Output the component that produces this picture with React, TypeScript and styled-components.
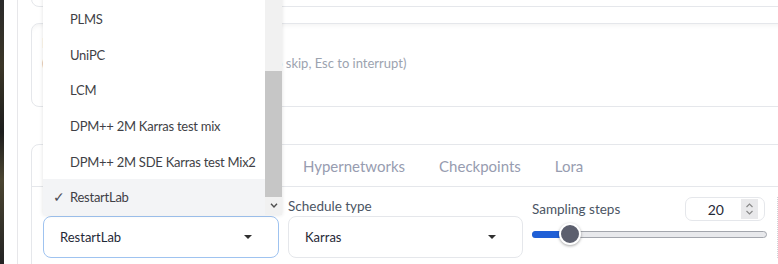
import React from 'react';
import styled, { createGlobalStyle } from 'styled-components';

const GlobalStyle = createGlobalStyle`
  html, body {
    margin: 0;
    padding: 0;
    background: #ffffff;
  }
  body {
    font-family: 'Lato', 'Liberation Sans', sans-serif;
    overflow: hidden;
  }
  * {
    box-sizing: border-box;
  }
`;

const Page = styled.div`
  display: flex;
  width: 778px;
  height: 264px;
  overflow: hidden;
`;

const EdgeStrip = styled.div`
  flex: none;
  width: 4px;
  background: linear-gradient(
    180deg,
    #2a2a2a 0%,
    #3b3627 25%,
    #1d1d1d 50%,
    #4b4531 68%,
    #232323 100%
  );
`;

const Gutter = styled.div`
  flex: none;
  width: 14px;
  margin-left: 13px;
  border-left: 1px solid #e7e7ea;
`;

const Main = styled.div`
  flex: none;
  width: 780px;
  display: flex;
  flex-direction: column;
`;

const Card = styled.div`
  flex: none;
  border: 1px solid #e5e7eb;
  border-radius: 8px;
  background: #ffffff;
`;

const PromptTail = styled(Card)`
  height: 30px;
  margin-top: -23px;
`;

const NegativePrompt = styled(Card)`
  height: 84px;
  margin-top: 16px;
  padding: 9px 10px;
  box-shadow: inset 0 5px 6px -5px rgba(0, 0, 0, 0.08);
`;

const Placeholder = styled.div`
  font-size: 13px;
  line-height: 20px;
  color: #9ca3af;
  white-space: pre;
`;

const SettingsCard = styled(Card)`
  margin-top: 37px;
  height: 140px;
`;

const TabNav = styled.div<{ $offset: number }>`
  display: flex;
  height: 42px;
  padding-left: ${(p) => p.$offset}px;
  border-bottom: 1px solid #e5e7eb;
`;

const Tab = styled.div<{ $active?: boolean }>`
  display: flex;
  align-items: center;
  padding: 0 17px;
  font-size: 15px;
  color: ${(p) => (p.$active ? '#ea580c' : '#979cb0')};
  white-space: nowrap;
`;

const SettingsRow = styled.div`
  display: flex;
  gap: 9px;
  padding: 10px 0 0 11px;
`;

const Column = styled.div<{ $width: number }>`
  flex: none;
  width: ${(p) => p.$width}px;
  display: flex;
  flex-direction: column;
`;

const Label = styled.div`
  height: 19px;
  font-size: 13.5px;
  line-height: 19px;
  color: #4b5563;
  white-space: nowrap;
`;

const FieldWrap = styled.div`
  position: relative;
`;

const Field = styled.div<{ $focused?: boolean }>`
  display: flex;
  align-items: center;
  height: 42px;
  padding: 0 26px 0 16px;
  border: 1px solid ${(p) => (p.$focused ? '#9fc3f0' : '#e5e7eb')};
  border-radius: 8px;
  background: #ffffff;
  font-size: 13px;
  color: #1f2937;
`;

const FieldValue = styled.span`
  flex: 1;
`;

const Caret = styled.span`
  width: 0;
  height: 0;
  border-left: 4px solid transparent;
  border-right: 4px solid transparent;
  border-top: 4px solid #2f2f2f;
`;

const OptionsList = styled.div`
  position: absolute;
  left: 0;
  bottom: calc(100% + 1px);
  width: 239px;
  display: flex;
  background: #ffffff;
  box-shadow: 0 0 4px rgba(0, 0, 0, 0.12);
  z-index: 10;
`;

const Options = styled.div`
  flex: 1;
  min-width: 0;
  display: flex;
  flex-direction: column;
`;

const Option = styled.div<{ $selected?: boolean }>`
  display: flex;
  align-items: center;
  height: 35.6px;
  padding-left: 10px;
  font-size: 13px;
  letter-spacing: -0.25px;
  color: #3f3f46;
  background: ${(p) => (p.$selected ? '#f3f4f6' : 'transparent')};
  white-space: nowrap;
  overflow: hidden;
`;

const Check = styled.span`
  flex: none;
  width: 17px;
  font-family: 'DejaVu Sans', sans-serif;
  font-size: 14px;
  font-weight: 300;
  color: #4b4b55;
`;

const Scrollbar = styled.div`
  flex: none;
  width: 17px;
  display: flex;
  flex-direction: column;
  background: #f1f1f1;
  padding-bottom: 2px;
`;

const ScrollSpacer = styled.div`
  flex: 1;
`;

const ScrollThumb = styled.div`
  height: 126px;
  background: #c6c6c6;
`;

const ScrollArrow = styled.div`
  height: 16px;
  display: flex;
  align-items: center;
  justify-content: center;
`;

const StepsHeader = styled.div`
  display: flex;
  align-items: center;
  justify-content: space-between;
  height: 24px;
`;

const StepsLabel = styled(Label)`
  margin-top: 1px;
`;

const NumberBox = styled.div`
  display: flex;
  align-items: center;
  width: 80px;
  height: 24px;
  margin-right: 2px;
  padding-right: 6px;
  border: 1px solid #e5e7eb;
  border-radius: 7px;
  font-size: 14px;
  color: #1f2937;
`;

const NumberValue = styled.span`
  flex: 1;
  text-align: right;
  padding-right: 17px;
`;

const Spinner = styled.div`
  width: 17px;
  height: 20px;
  background: #e9e9eb;
  display: flex;
  align-items: center;
  justify-content: center;
`;

const SliderArea = styled.div`
  height: 26px;
  display: flex;
  align-items: center;
`;

const Track = styled.div`
  position: relative;
  width: 100%;
  height: 7px;
  border: 1px solid #a3a6ad;
  border-radius: 4px;
  background: #e8e9ec;
`;

const TrackFill = styled.div`
  position: absolute;
  left: -1px;
  top: -1px;
  bottom: -1px;
  border-radius: 4px 0 0 4px;
  background: #1f5fd6;
`;

const Thumb = styled.div`
  position: absolute;
  top: 50%;
  width: 22px;
  height: 22px;
  margin: -11px 0 0 -11px;
  border: 2px solid #ffffff;
  border-radius: 50%;
  background: #5c5f6e;
  box-shadow: 0 1px 3px rgba(0, 0, 0, 0.35);
`;

const DottedEdge = styled.div`
  flex: none;
  width: 20px;
  margin-left: 1px;
  border-left: 1px dotted #cfd2d8;
`;

const samplers = [
  'DDIM',
  'DDIM CFG++',
  'PLMS',
  'UniPC',
  'LCM',
  'DPM++ 2M Karras test mix',
  'DPM++ 2M SDE Karras test Mix2',
  'RestartLab',
];

const tabs = ['Generation', 'Textual Inversion', 'Hypernetworks', 'Checkpoints', 'Lora'];

function Chevron() {
  return (
    <svg width="8" height="5" viewBox="0 0 8 5">
      <path d="M1 0.8 L4 4 L7 0.8" fill="none" stroke="#505050" strokeWidth="1.4" />
    </svg>
  );
}

function SamplerList({ selected }: { selected: string }) {
  return (
    <OptionsList>
      <Options>
        {samplers.map((s) => (
          <Option key={s} $selected={s === selected}>
            <Check>{s === selected ? '✓' : ''}</Check>
            {s}
          </Option>
        ))}
      </Options>
      <Scrollbar>
        <ScrollSpacer />
        <ScrollThumb />
        <ScrollArrow>
          <Chevron />
        </ScrollArrow>
      </Scrollbar>
    </OptionsList>
  );
}

export default function App() {
  const steps = 20;
  const pct = ((steps - 1) / (150 - 1)) * 100 + 3;
  return (
    <>
      <GlobalStyle />
      <Page>
        <EdgeStrip />
        <Gutter />
        <Main>
          <PromptTail />
          <NegativePrompt>
            <Placeholder>
              {'Negative prompt\n(Press Ctrl+Enter to generate, Alt+Enter to skip, Esc to interrupt)'}
            </Placeholder>
          </NegativePrompt>
          <SettingsCard>
            <TabNav $offset={1}>
              {tabs.map((t, i) => (
                <Tab key={t} $active={i === 0}>
                  {t}
                </Tab>
              ))}
            </TabNav>
            <SettingsRow>
              <Column $width={236}>
                <Label>Sampling method</Label>
                <FieldWrap>
                  <SamplerList selected="RestartLab" />
                  <Field $focused>
                    <FieldValue>RestartLab</FieldValue>
                    <Caret />
                  </Field>
                </FieldWrap>
              </Column>
              <Column $width={235}>
                <Label>Schedule type</Label>
                <Field>
                  <FieldValue>Karras</FieldValue>
                  <Caret />
                </Field>
              </Column>
              <Column $width={235}>
                <StepsHeader>
                  <StepsLabel>Sampling steps</StepsLabel>
                  <NumberBox>
                    <NumberValue>{steps}</NumberValue>
                    <Spinner>
                      <svg width="9" height="14" viewBox="0 0 9 14">
                        <path d="M1.5 5 L4.5 2 L7.5 5" fill="none" stroke="#8a8a8a" strokeWidth="1.2" />
                        <path d="M1.5 9 L4.5 12 L7.5 9" fill="none" stroke="#8a8a8a" strokeWidth="1.2" />
                      </svg>
                    </Spinner>
                  </NumberBox>
                </StepsHeader>
                <SliderArea>
                  <Track>
                    <TrackFill style={{ width: `${pct}%` }} />
                    <Thumb style={{ left: `${pct}%` }} />
                  </Track>
                </SliderArea>
              </Column>
              <DottedEdge />
            </SettingsRow>
          </SettingsCard>
        </Main>
      </Page>
    </>
  );
}
